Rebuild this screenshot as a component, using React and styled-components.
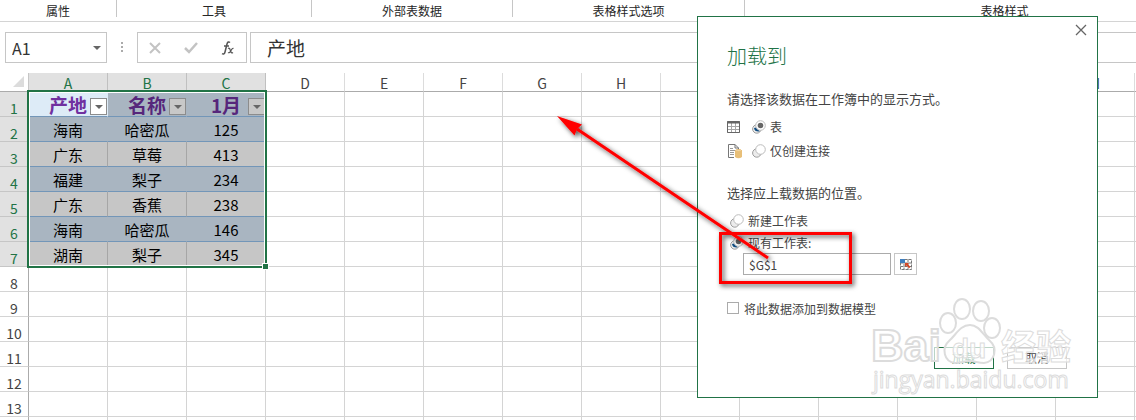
import React from "react";
import styled, { createGlobalStyle, css } from "styled-components";

const Global = createGlobalStyle`
  *, *::before, *::after { box-sizing: border-box; }
  body {
    margin: 0;
    background: #fff;
    color: #262626;
    font-family: "Noto Sans CJK SC", "Liberation Sans", sans-serif;
    font-size: 12px;
  }
`;

const green = "#217346";
const line = "#d4d4d4";

const Shell = styled.main`
  position: relative;
  display: flex;
  flex-direction: column;
  height: 100vh;
  overflow: hidden;
`;

const Ribbon = styled.header`
  display: flex;
  flex: none;
  height: 22px;
  overflow: hidden;
  border-bottom: 1px solid ${line};
`;

const RibbonGroup = styled.div`
  flex: none;
  width: ${(p) => p.$width}px;
  height: 17px;
  padding-top: 1px;
  border-right: 1px solid #c6c6c6;
`;

const RibbonLabel = styled.div`
  line-height: 20px;
  text-align: center;
`;

const FormulaBar = styled.div`
  display: flex;
  flex: none;
  align-items: flex-start;
  height: 51px;
  padding: 10px 0 0 5px;
`;

const barBox = css`
  height: 31px;
  border: 1px solid #c6c6c6;
  background: #fff;
`;

const NameBox = styled.div`
  ${barBox}
  display: flex;
  align-items: center;
  width: 102px;
  padding-right: 5px;
`;

const NameInput = styled.input`
  flex: 1;
  min-width: 0;
  padding: 0 0 0 6px;
  border: 0;
  outline: 0;
  background: none;
  color: #333;
  font: 16px/28px "Noto Sans CJK SC", sans-serif;
`;

const PlainButton = styled.button`
  display: flex;
  align-items: center;
  justify-content: center;
  padding: 0;
  border: 0;
  background: none;
`;

const Dots = styled.svg`
  width: 30px;
  height: 31px;
`;

const BarActions = styled.div`
  ${barBox}
  display: flex;
  align-items: center;
  justify-content: space-around;
  width: 110px;
  margin-right: 3px;
`;

const FormulaInput = styled.input`
  ${barBox}
  flex: 1;
  min-width: 0;
  padding: 0 0 0 16px;
  border-right: 0;
  border-radius: 0;
  outline: 0;
  color: #333;
  font: 19px/28px "Noto Sans CJK SC", sans-serif;
`;

const SheetArea = styled.div`
  position: relative;
  flex: 1;
  overflow: hidden;
`;

const Grid = styled.table`
  table-layout: fixed;
  width: 1px;
  border-spacing: 0;
  font-size: 14px;
`;

const Corner = styled.th`
  width: 29px;
  height: 19px;
  padding: 0;
  border-right: 1px solid #c6c6c6;
  border-bottom: 1px solid #ababab;
  line-height: 0;
  text-align: right;
`;

const ColumnHead = styled.th`
  width: 79px;
  height: 19px;
  padding: 2px 0 0;
  border-right: 1px solid ${(p) => (p.$selected ? "#c0c0c0" : "#dcdcdc")};
  border-bottom: 1px solid #ababab;
  background: ${(p) => (p.$selected ? "#e1e1e1" : "#fff")};
  color: ${(p) => (p.$selected ? green : "#444")};
  font-weight: 400;
  line-height: 16px;
`;

const RowHead = styled.th`
  height: 25px;
  padding: 8px 0 0;
  border-right: 1px solid #ababab;
  border-bottom: 1px solid ${(p) => (p.$selected ? "#c6c6c6" : line)};
  background: ${(p) => (p.$selected ? "#e1e1e1" : "#fff")};
  color: ${(p) => (p.$selected ? green : "#444")};
  font-weight: 400;
  line-height: 16px;
`;

const fills = {
  active: "#ddebf7",
  blue: "#a9b5c1",
  gray: "#c6c6c6",
};

const Cell = styled.td`
  position: relative;
  height: 25px;
  padding: 2px 0 0;
  border-right: 1px solid ${(p) => (p.$fill ? (p.$fill === "gray" ? "#a6a6a6" : fills[p.$fill]) : line)};
  border-bottom: 1px solid ${(p) => (p.$fill ? "#7396b8" : line)};
  background: ${(p) => fills[p.$fill] || "#fff"};
  color: ${(p) => (p.$title ? (p.$fill === "active" ? "#7030a0" : "#56267b") : "#000")};
  font-size: ${(p) => (p.$title ? 19 : 15)}px;
  font-weight: ${(p) => (p.$title ? 700 : 400)};
  line-height: 22px;
  text-align: center;
  white-space: nowrap;
`;

const FilterButton = styled(PlainButton)`
  position: absolute;
  right: 0;
  bottom: 1px;
  width: 17px;
  height: 17px;
  border: 1px solid #8c8c8c;
  background: ${(p) => (p.$light ? "#fff" : "#c8c8c8")};
`;

const Selection = styled.div`
  position: absolute;
  top: 17px;
  left: 27px;
  width: 240px;
  height: 178px;
  border: 2px solid ${green};
  box-shadow: inset 0 0 0 1px #fff;
  pointer-events: none;

  &::after {
    content: "";
    position: absolute;
    right: -4px;
    bottom: -4px;
    width: 7px;
    height: 7px;
    border: 1px solid #fff;
    background: ${green};
  }
`;

const Dialog = styled.section`
  position: absolute;
  top: 16px;
  right: 38px;
  width: 401px;
  padding: 27px 30px 28px 29px;
  border: 1px solid ${green};
  background: #fff;
  color: #444;
`;

const CloseButton = styled(PlainButton)`
  position: absolute;
  top: 6px;
  right: 9px;
  width: 14px;
  height: 14px;
`;

const Title = styled.h1`
  margin: 0;
  color: ${green};
  font-size: 20px;
  font-weight: 300;
  line-height: 24px;
`;

const Fieldset = styled.fieldset`
  margin: 0;
  padding: 0;
  border: 0;
`;

const Legend = styled.legend`
  padding: 21px 0 7px;
  font-size: 13px;
  line-height: 20px;
`;

const Options = styled.div`
  display: flex;
  flex-direction: column;
  gap: ${(p) => (p.$tight ? 1 : 3)}px;
  padding-bottom: ${(p) => (p.$tight ? 0 : 1)}px;
`;

const Option = styled.label`
  display: flex;
  align-items: center;
  height: 21px;
  padding-left: ${(p) => (p.$indent ? 3 : 0)}px;
`;

const OptionIcon = styled.svg`
  width: 16px;
  height: 16px;
  margin-right: 9px;
`;

const RadioBox = styled.span`
  display: grid;
  width: 14px;
  height: 14px;
  margin-right: 4px;

  > * { grid-area: 1 / 1; }
`;

const RadioInput = styled.input`
  width: 14px;
  height: 14px;
  margin: 0;
  appearance: none;
`;

const RangeRow = styled.div`
  display: flex;
  gap: 3px;
  padding-left: 16px;
`;

const RangeInput = styled.input`
  width: 148px;
  height: 22px;
  padding: 0 5px;
  border: 1px solid #ababab;
  outline: 0;
  color: #444;
  font: 12px/20px "Noto Sans CJK SC", sans-serif;
`;

const RangeButton = styled(PlainButton)`
  width: 23px;
  height: 22px;
  border: 1px solid #c6c6c6;
`;

const CheckLabel = styled.label`
  display: flex;
  align-items: center;
  gap: 5px;
  height: 20px;
  margin-top: 23px;
`;

const CheckInput = styled.input`
  width: 12px;
  height: 12px;
  margin: 0;
  border: 1px solid #ababab;
  appearance: none;
`;

const Actions = styled.div`
  display: flex;
  justify-content: flex-end;
  gap: 13px;
  margin-top: 29px;
`;

const ActionButton = styled.button`
  width: 60px;
  height: 22px;
  padding: 0;
  border: 1px solid ${(p) => (p.$primary ? green : "#c6c6c6")};
  background: #fff;
  color: ${(p) => (p.$primary ? green : "#444")};
  font: 12px/18px "Noto Sans CJK SC", sans-serif;
`;

const Overlay = styled.svg`
  position: absolute;
  top: 0;
  right: 0;
  width: 600px;
  height: 420px;
  pointer-events: none;
`;

const columns = "ABCDEFGHIJKLMNOPQRSTUVWXYZ".split("");
const groups = [
  ["属性", 117],
  ["工具", 195],
  ["外部表数据", 201],
  ["表格样式选项", 232],
  ["表格样式", 520],
];
const data = [
  ["产地", "名称", "1月"],
  ["海南", "哈密瓜", "125"],
  ["广东", "草莓", "413"],
  ["福建", "梨子", "234"],
  ["广东", "香蕉", "238"],
  ["海南", "哈密瓜", "146"],
  ["湖南", "梨子", "345"],
];
const rows = Array.from({ length: 14 }, (_, i) => i);

function fillOf(row, col) {
  if (row >= data.length || col > 2) return undefined;
  if (row === 0 && col === 0) return "active";
  return row === 0 || row % 2 === 1 ? "blue" : "gray";
}

function Caret() {
  return (
    <svg width="8" height="4" viewBox="0 0 8 4" aria-hidden="true">
      <path d="M0 0H8L4 4Z" fill="#666" />
    </svg>
  );
}

function Radio({ checked, name }) {
  return (
    <RadioBox>
      <svg width="14" height="14" viewBox="0 0 14 14" aria-hidden="true">
        <circle cx="4.800" cy="9" r="4.200" fill="#ececec" stroke="#9c9c9c" />
        {checked && <path d="M2 8Q2.500 12 7.500 11.500L6 7Z" fill="#0f4c81" />}
        <circle cx="8.500" cy="5.500" r="4.800" fill="#fff" stroke="#bcbcbc" />
        {checked && <circle cx="8.500" cy="5.500" r="2.800" fill="#666" />}
      </svg>
      <RadioInput type="radio" name={name} defaultChecked={checked} />
    </RadioBox>
  );
}

export default function App() {
  return (
    <Shell>
      <Global />
      <Ribbon>
        {groups.map(([label, width]) => (
          <RibbonGroup key={label} $width={width}>
            <RibbonLabel>{label}</RibbonLabel>
          </RibbonGroup>
        ))}
      </Ribbon>

      <FormulaBar>
        <NameBox>
          <NameInput aria-label="名称框" defaultValue="A1" />
          <PlainButton aria-label="展开名称框"><Caret /></PlainButton>
        </NameBox>
        <Dots viewBox="0 0 30 31" aria-hidden="true">
          <path d="M14 10h2v2h-2zM14 14h2v2h-2zM14 18h2v2h-2z" fill="#ababab" />
        </Dots>
        <BarActions>
          <PlainButton aria-label="取消输入">
            <svg width="12" height="12" viewBox="0 0 12 12"><path d="M1 1L11 11M11 1L1 11" stroke="#c3c3c3" strokeWidth="2" /></svg>
          </PlainButton>
          <PlainButton aria-label="输入">
            <svg width="14" height="12" viewBox="0 0 14 12"><path d="M1 6L5 10L13 1" fill="none" stroke="#c3c3c3" strokeWidth="2.500" /></svg>
          </PlainButton>
          <PlainButton aria-label="插入函数">
            <svg width="14" height="16" viewBox="0 0 14 16" fill="none" stroke="#555">
              <path d="M9 2.500Q7 .8 6 4L4 12Q3.300 15 1 13.700M3 6H8" strokeWidth="1.500" />
              <path d="M7 8.500Q8.500 7.500 9 9.500L10 12Q10.500 13.500 12 12.500M12.500 8.500Q11.500 7.800 10 10.500Q8.500 13.500 7 12.500" strokeWidth="1.200" />
            </svg>
          </PlainButton>
        </BarActions>
        <FormulaInput aria-label="编辑栏" defaultValue="产地" />
      </FormulaBar>

      <SheetArea>
        <Grid>
          <thead>
            <tr>
              <Corner>
                <svg width="15" height="14" viewBox="0 0 15 14" aria-hidden="true">
                  <path d="M11 1V12H0Z" fill="#dcdcdc" />
                </svg>
              </Corner>
              {columns.map((c, i) => (
                <ColumnHead key={c} scope="col" $selected={i < 3}>{c}</ColumnHead>
              ))}
            </tr>
          </thead>
          <tbody>
            {rows.map((r) => (
              <tr key={r}>
                <RowHead scope="row" $selected={r < data.length}>{r + 1}</RowHead>
                {columns.map((c, i) => (
                  <Cell key={c} $fill={fillOf(r, i)} $title={r === 0}>
                    {data[r] && data[r][i]}
                    {r === 0 && i < 3 && (
                      <FilterButton $light={i === 0} aria-label="筛选"><Caret /></FilterButton>
                    )}
                  </Cell>
                ))}
              </tr>
            ))}
          </tbody>
        </Grid>
        <Selection />
      </SheetArea>

      <Dialog role="dialog" aria-labelledby="load-title">
        <CloseButton aria-label="关闭">
          <svg width="12" height="12" viewBox="0 0 12 12"><path d="M1 1L11 11M11 1L1 11" stroke="#666" strokeWidth="1.300" /></svg>
        </CloseButton>
        <Title id="load-title">加载到</Title>
        <Fieldset>
          <Legend>请选择该数据在工作簿中的显示方式。</Legend>
          <Options>
            <Option>
              <OptionIcon viewBox="0 0 16 16" aria-hidden="true">
                <path d="M.5 2.500H12.500V13.500H.5ZM.5 7.500H12.500M.5 10.500H12.500M4.500 4V13.500M8.500 4V13.500" fill="none" stroke="#a6a6a6" />
                <path d="M.5 4V2.500H12.500V4Z" fill="#666" stroke="#666" />
                <path d="M.5 3V13.500H12.500V3" fill="none" stroke="#666" />
              </OptionIcon>
              <Radio name="view" checked />
              表
            </Option>
            <Option>
              <OptionIcon viewBox="0 0 16 16" aria-hidden="true">
                <path d="M7 14.500H1.500V1.500H8L11.500 5V7M8 1.500V5H11.500" fill="#fff" stroke="#777" />
                <path d="M3 5.500H6M3 7.500H8M3 9.500H7M3 11.500H7" stroke="#999" />
                <path d="M8 7V14Q11.500 16.500 15 14V7Z" fill="#e8bf78" />
                <ellipse cx="11.500" cy="7.500" rx="3" ry="1" fill="#f3d8a6" stroke="#e8bf78" />
              </OptionIcon>
              <Radio name="view" />
              仅创建连接
            </Option>
          </Options>
        </Fieldset>
        <Fieldset>
          <Legend>选择应上载数据的位置。</Legend>
          <Options $tight>
            <Option $indent><Radio name="place" />新建工作表</Option>
            <Option $indent><Radio name="place" checked />现有工作表:</Option>
          </Options>
          <RangeRow>
            <RangeInput aria-label="现有工作表" defaultValue="$G$1" />
            <RangeButton aria-label="选择区域">
              <svg width="12" height="11" viewBox="0 0 12 11">
                <path d="M.5.5H11.500V10.500H.5ZM.5 4H11.500M.5 7.500H11.500M4 .5V10.500M8 .5V10.500" fill="none" stroke="#777" strokeDasharray="3 1" />
                <path d="M0 0H5V4H0Z" fill="#3f7fbf" />
                <path d="M5 4H9L8 5.200L10.500 8L9 9.200L6.500 6.500L5 8Z" fill="#d24726" />
              </svg>
            </RangeButton>
          </RangeRow>
        </Fieldset>
        <CheckLabel><CheckInput type="checkbox" />将此数据添加到数据模型</CheckLabel>
        <Actions>
          <ActionButton $primary>加载</ActionButton>
          <ActionButton>取消</ActionButton>
        </Actions>
      </Dialog>

      <Overlay viewBox="536 0 600 420" aria-hidden="true">
        <defs>
          <filter id="shade" x="-20%" y="-20%" width="140%" height="150%">
            <feDropShadow dx="2" dy="2" stdDeviation="2.500" floodColor="#000" floodOpacity=".7" />
          </filter>
        </defs>
        <g fill="#fff" fillOpacity=".7" stroke="#dcdcdc" strokeWidth="2" fontFamily="Liberation Sans, sans-serif" fontWeight="700">
          <text x="871" y="361" fontSize="45">Bai</text>
          <path d="M970 325C979 325 983 335 990 341C998 348 995 362 984 363C978 363 975 361 970 361C964 361 961 363 955 363C944 362 941 348 949 341C956 335 960 325 970 325Z" />
          <ellipse cx="948" cy="323" rx="8" ry="10" />
          <ellipse cx="962" cy="309" rx="8" ry="10" />
          <ellipse cx="981" cy="311" rx="8" ry="10" />
          <ellipse cx="992" cy="328" rx="8" ry="10" />
          <text x="952" y="358" fontSize="28" strokeWidth="1">du</text>
          <text x="1001" y="360" fontSize="35" strokeWidth="1" fontFamily="Noto Sans CJK SC, sans-serif">经验</text>
          <text x="873" y="388" fontSize="23" fontWeight="400" strokeWidth="1" fontFamily="Open Sans, sans-serif">jingyan.baidu.com</text>
        </g>
        <g filter="url(#shade)">
          <path d="M720.500 233.500H850.500V282.500H720.500Z" fill="none" stroke="#f00" strokeWidth="3" />
          <path d="M768 258L577 129" stroke="#f00" strokeWidth="3" />
          <path d="M557 116L582 124.500L577 129L574.500 135.500Z" fill="#f00" />
        </g>
      </Overlay>
    </Shell>
  );
}
